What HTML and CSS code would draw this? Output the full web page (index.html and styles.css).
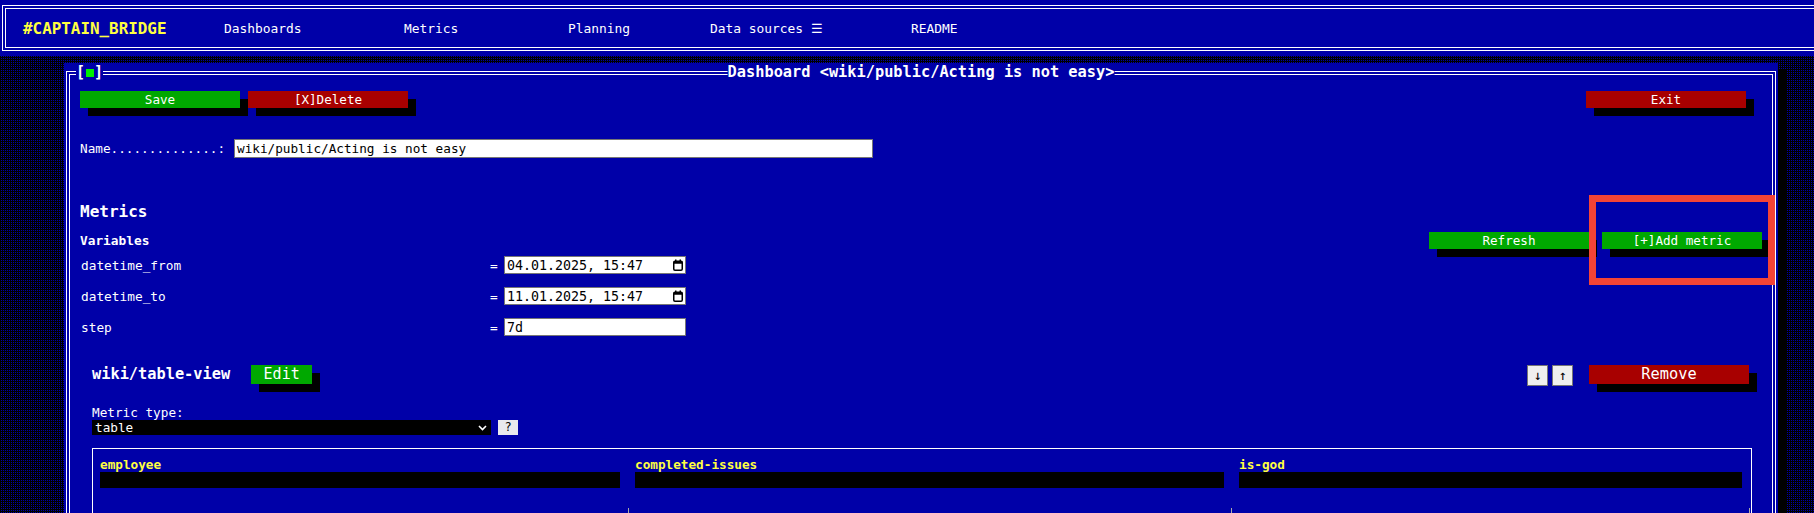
FILE: index.html
```html
<!DOCTYPE html>
<html lang="en">
<head>
<meta charset="utf-8">
<title>Captain Bridge - Dashboard</title>
<link rel="stylesheet" href="styles.css">
</head>
<body>
<header class="topbar">
  <nav class="topbar-box">
    <span class="logo">#CAPTAIN_BRIDGE</span>
    <a class="nav-link" href="#">Dashboards</a>
    <a class="nav-link" href="#">Metrics</a>
    <a class="nav-link" href="#">Planning</a>
    <a class="nav-link" href="#">Data sources ☰</a>
    <a class="nav-link" href="#">README</a>
  </nav>
</header>
<main class="desktop">
  <section class="window">
    <div class="frame">
      <div class="legend-left">[<span class="sq"></span>]</div>
      <div class="legend-title">Dashboard &lt;wiki/public/Acting is not easy&gt;</div>

      <div class="toolbar">
        <div class="btn-group">
          <button class="btn btn-green">Save</button>
          <button class="btn btn-red">[X]Delete</button>
        </div>
        <button class="btn btn-red">Exit</button>
      </div>

      <div class="name-row">
        <span class="name-label">Name..............:</span>
        <div class="text-input">wiki/public/Acting is not easy</div>
      </div>

      <h2 class="metrics-title">Metrics</h2>

      <div class="vars-head">
        <h3 class="vars-title">Variables</h3>
        <div class="btn-group wide">
          <button class="btn btn-green">Refresh</button>
          <button class="btn btn-green">[+]Add metric</button>
        </div>
      </div>

      <div class="vars">
        <span class="var-name">datetime_from</span>
        <span class="var-eq">=</span>
        <div class="field"><span>04.01.2025, 15:47</span>
          <svg class="cal" width="10" height="12" viewBox="0 0 10 12"><rect x="0.75" y="2.25" width="8.5" height="9" rx="1.2" fill="none" stroke="#000" stroke-width="1.5"/><rect x="0.75" y="2.25" width="8.5" height="2.5" fill="#000"/><rect x="2" y="0.5" width="1.5" height="2" fill="#000"/><rect x="6.5" y="0.5" width="1.5" height="2" fill="#000"/></svg>
        </div>
        <span class="var-name">datetime_to</span>
        <span class="var-eq">=</span>
        <div class="field"><span>11.01.2025, 15:47</span>
          <svg class="cal" width="10" height="12" viewBox="0 0 10 12"><rect x="0.75" y="2.25" width="8.5" height="9" rx="1.2" fill="none" stroke="#000" stroke-width="1.5"/><rect x="0.75" y="2.25" width="8.5" height="2.5" fill="#000"/><rect x="2" y="0.5" width="1.5" height="2" fill="#000"/><rect x="6.5" y="0.5" width="1.5" height="2" fill="#000"/></svg>
        </div>
        <span class="var-name">step</span>
        <span class="var-eq">=</span>
        <div class="field"><span>7d</span></div>
      </div>

      <div class="metric">
        <div class="metric-head">
          <span class="metric-name">wiki/table-view</span>
          <button class="btn btn-green btn-edit">Edit</button>
          <div class="metric-actions">
            <button class="arrow-btn">↓</button>
            <button class="arrow-btn">↑</button>
            <button class="btn btn-red btn-remove">Remove</button>
          </div>
        </div>
        <div class="type-label">Metric type:</div>
        <div class="type-row">
          <div class="select"><span>table</span>
            <svg width="9" height="6" viewBox="0 0 9 6"><path d="M1 1 L4.5 4.5 L8 1" fill="none" stroke="#fff" stroke-width="1.6"/></svg>
          </div>
          <button class="help-btn">?</button>
        </div>
        <div class="table-box">
          <div class="cols">
            <div class="col-head"><div class="col-name">employee</div><div class="col-bar"></div></div>
            <div class="col-head"><div class="col-name">completed-issues</div><div class="col-bar"></div></div>
            <div class="col-head"><div class="col-name">is-god</div><div class="col-bar"></div></div>
            <div class="cell"></div>
            <div class="cell"></div>
            <div class="cell"></div>
          </div>
        </div>
      </div>
    </div>
  </section>
</main>
<div class="highlight"></div>
</body>
</html>
```
FILE: styles.css
```css
* { box-sizing: border-box; margin: 0; padding: 0; }
html, body { height: 100%; overflow: hidden; }
body {
  background: #0000a8;
  color: #fff;
  font-family: "DejaVu Sans Mono", "Liberation Mono", monospace;
  font-size: 12.7px;
}
button { font-family: "DejaVu Sans Mono", "Liberation Mono", monospace; border: 0; cursor: pointer; }

/* top bar */
.topbar { height: 56px; padding: 5px 0 0 2px; background: #0000a8; overflow: hidden; }
.topbar-box {
  height: 46px;
  margin-right: -10px;
  border: 1px solid #fff;
  box-shadow: inset 0 0 0 2px #0000a8, inset 0 0 0 3px #fff;
  display: grid;
  grid-template-columns: 201px 180px 164px 142px 201px auto;
  align-items: center;
  padding-left: 20px;
}
.logo { color: #ffff40; font-weight: bold; font-size: 15.9px; }
.nav-link { color: #fff; text-decoration: none; font-size: 12.9px; }

/* desktop */
.desktop {
  height: calc(100% - 56px);
  background-color: #000;
  background-image: conic-gradient(#0000a8 0 25%, #000 0 100%);
  background-size: 2px 2px;
  padding: 7px 0 0 64px;
}
.window {
  width: 1714px;
  height: 460px;
  background: #0000a8;
  box-shadow: 8px 7px 0 #000;
  padding: 8px 2px 0 2px;
  overflow: hidden;
}
.frame {
  position: relative;
  height: 480px;
  border: 1px solid #fff;
  box-shadow: inset 0 0 0 2px #0000a8, inset 0 0 0 3px #fff;
}
.legend-left, .legend-title {
  position: absolute;
  top: -8px;
  background: #0000a8;
  font-weight: bold;
  line-height: 17px;
  white-space: nowrap;
}
.legend-left { left: 9px; font-size: 15px; }
.sq { display: inline-block; width: 8px; height: 8px; background: #00f000; margin: 0 0.5px; vertical-align: 0; }
.legend-title { left: 50%; transform: translateX(-50%); font-size: 15.3px; }

/* buttons */
.btn {
  width: 160px;
  height: 17px;
  color: #fff;
  font-size: 12.6px;
  line-height: 17px;
  text-align: center;
  box-shadow: 8px 8px 0 #000;
}
.btn-green { background: #00a800; }
.btn-red { background: #a80000; }
.btn-group { display: flex; gap: 8px; }
.btn-group.wide { gap: 13px; }

.toolbar { display: flex; justify-content: space-between; margin-top: 19px; padding: 0 29px 0 13px; }

.name-row { display: flex; align-items: center; margin-top: 31px; padding-left: 13px; }
.name-label { width: 154px; white-space: pre; }
.text-input {
  width: 639px;
  height: 19px;
  background: #fff;
  border: 1px solid #767676;
  color: #000;
  padding: 0 2px;
  line-height: 17px;
  font-size: 12.7px;
}

.metrics-title { margin-top: 44px; padding-left: 13px; font-size: 16px; line-height: 20px; font-weight: bold; }

.vars-head { display: flex; justify-content: space-between; align-items: center; margin-top: 10px; padding: 0 13px; height: 17px; }
.vars-title { font-size: 12.8px; font-weight: bold; }

.vars {
  display: grid;
  grid-template-columns: 407px 16px 182px;
  row-gap: 13px;
  align-items: center;
  margin-top: 7px;
  padding-left: 14px;
}
.var-name { font-size: 12.8px; }
.var-eq { padding-left: 2px; font-size: 12.8px; }
.field {
  height: 18px;
  background: #fff;
  border: 1px solid #767676;
  color: #000;
  display: flex;
  align-items: center;
  justify-content: space-between;
  padding: 0 2px;
  font-size: 13.3px;
}
.cal { display: block; }

/* metric card */
.metric { margin-top: 29px; margin-left: 25px; width: 1660px; }
.metric-head { display: flex; align-items: flex-start; height: 21px; padding-right: 3px; }
.metric-name { font-weight: bold; font-size: 15.3px; line-height: 19px; }
.btn-edit { width: 61px; height: 19px; margin-left: 21px; font-size: 15px; line-height: 19px; }
.metric-actions { margin-left: auto; display: flex; align-items: flex-start; gap: 4px; }
.arrow-btn {
  width: 21px;
  height: 21px;
  background: #efefef;
  border: 1px solid #767676;
  color: #000;
  font-size: 13.5px;
  line-height: 19px;
}
.btn-remove { height: 19px; margin-left: 12px; font-size: 15.3px; line-height: 19px; }

.type-label { margin-top: 20px; line-height: 14px; }
.type-row { display: flex; gap: 7px; }
.select {
  width: 399px;
  height: 15px;
  background: #000;
  color: #fff;
  display: flex;
  align-items: center;
  justify-content: space-between;
  padding: 0 4px 0 3px;
  font-size: 12.7px;
}
.select svg { display: block; }
.help-btn { width: 20px; height: 15px; background: #e9e9ed; color: #000; font-size: 12px; line-height: 15px; }

.table-box { margin-top: 13px; border: 1px solid #fff; padding: 9px 0 0 7px; height: 90px; }
.cols { display: grid; grid-template-columns: 529px 603px 518px; }
.col-head:nth-child(1) { padding-right: 9px; }
.col-head:nth-child(2) { padding: 0 8px 0 6px; }
.col-head:nth-child(3) { padding: 0 8px 0 7px; }
.col-name { color: #ffff40; font-weight: bold; font-size: 12.7px; line-height: 14px; }
.col-bar { height: 16px; background: #000; }
.cell { height: 30px; margin-top: 20px; border-right: 1px solid #aaa; }

/* annotation overlay */
.highlight {
  position: absolute;
  left: 1589px;
  top: 195px;
  width: 186px;
  height: 90px;
  border: 7px solid #f44336;
}
```
